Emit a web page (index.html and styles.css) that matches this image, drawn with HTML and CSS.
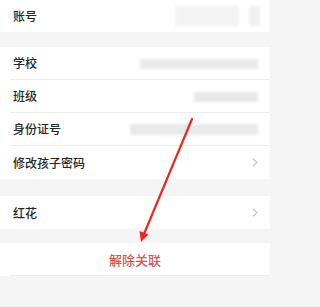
FILE: index.html
```html
<!DOCTYPE html>
<html lang="zh">
<head>
<meta charset="utf-8">
<link rel="stylesheet" href="styles.css">
</head>
<body>
<div class="page">
  <div class="group">
    <div class="row first">
      <span class="label">账号</span>
      <span class="blur acct-a"></span>
      <span class="blur acct-b"></span>
    </div>
  </div>

  <div class="group gap-a">
    <div class="row sep">
      <span class="label">学校</span>
      <span class="blur school"></span>
    </div>
    <div class="row sep">
      <span class="label">班级</span>
      <span class="blur klass"></span>
    </div>
    <div class="row sep">
      <span class="label">身份证号</span>
      <span class="blur idno"></span>
    </div>
    <div class="row">
      <span class="label">修改孩子密码</span>
      <svg class="chev" width="6" height="9" viewBox="0 0 6 9"><polyline points="1,0.8 5,4.5 1,8.2" fill="none" stroke="#c6c6c6" stroke-width="1.2"/></svg>
    </div>
  </div>

  <div class="group gap-b">
    <div class="row">
      <span class="label">红花</span>
      <svg class="chev" width="6" height="9" viewBox="0 0 6 9"><polyline points="1,0.8 5,4.5 1,8.2" fill="none" stroke="#c6c6c6" stroke-width="1.2"/></svg>
    </div>
  </div>

  <div class="group gap-c">
    <div class="row sep center">
      <span class="danger">解除关联</span>
    </div>
  </div>

  <svg class="arrow" width="270" height="307" viewBox="0 0 270 307">
    <line x1="192" y1="119" x2="144" y2="234" stroke="#e8291f" stroke-width="2.2" stroke-linecap="round"/>
    <polygon points="141,242 139.5,231 148.5,234.5" fill="#e8291f"/>
  </svg>
</div>
</body>
</html>
```

FILE: styles.css
```css
html, body {
  margin: 0;
  padding: 0;
  background: #f5f5f5;
}

.page {
  position: relative;
  width: 270px;
  height: 307px;
  overflow: hidden;
  font-family: "Noto Sans CJK SC", "Noto Sans", sans-serif;
}

.group {
  background: #ffffff;
  padding-left: 10px;
}

.gap-a { margin-top: 15px; }
.gap-b { margin-top: 17px; }
.gap-c { margin-top: 14px; }

.row {
  box-sizing: border-box;
  height: 33px;
  display: flex;
  align-items: center;
  padding-left: 3px;
  padding-right: 12px;
}

.row.first {
  height: 32px;
}

.row.sep {
  border-bottom: 1px solid #ececec;
}

.row.center {
  justify-content: center;
  padding-left: 0;
  padding-right: 10px;
}

.label {
  font-size: 12px;
  font-weight: 500;
  color: #262626;
  line-height: 1;
}

.danger {
  font-size: 13px;
  font-weight: 500;
  color: #dc5450;
  line-height: 1;
}

.chev {
  margin-left: auto;
  display: block;
}

.blur {
  display: block;
  background: #e9e9e9;
  filter: blur(1.5px);
}

.acct-a {
  margin-left: auto;
  width: 64px;
  height: 20px;
  background: #f3f3f3;
}

.acct-b {
  margin-left: 10px;
  width: 11px;
  height: 20px;
  background: #f1f1f1;
  margin-right: -2px;
}

.school {
  margin-left: auto;
  width: 118px;
  height: 10px;
  margin-top: 1px;
}

.klass {
  margin-left: auto;
  width: 64px;
  height: 10px;
  margin-top: 2px;
}

.idno {
  margin-left: auto;
  width: 128px;
  height: 11px;
  margin-top: 1px;
}

.arrow {
  position: absolute;
  left: 0;
  top: 0;
  pointer-events: none;
}
```
